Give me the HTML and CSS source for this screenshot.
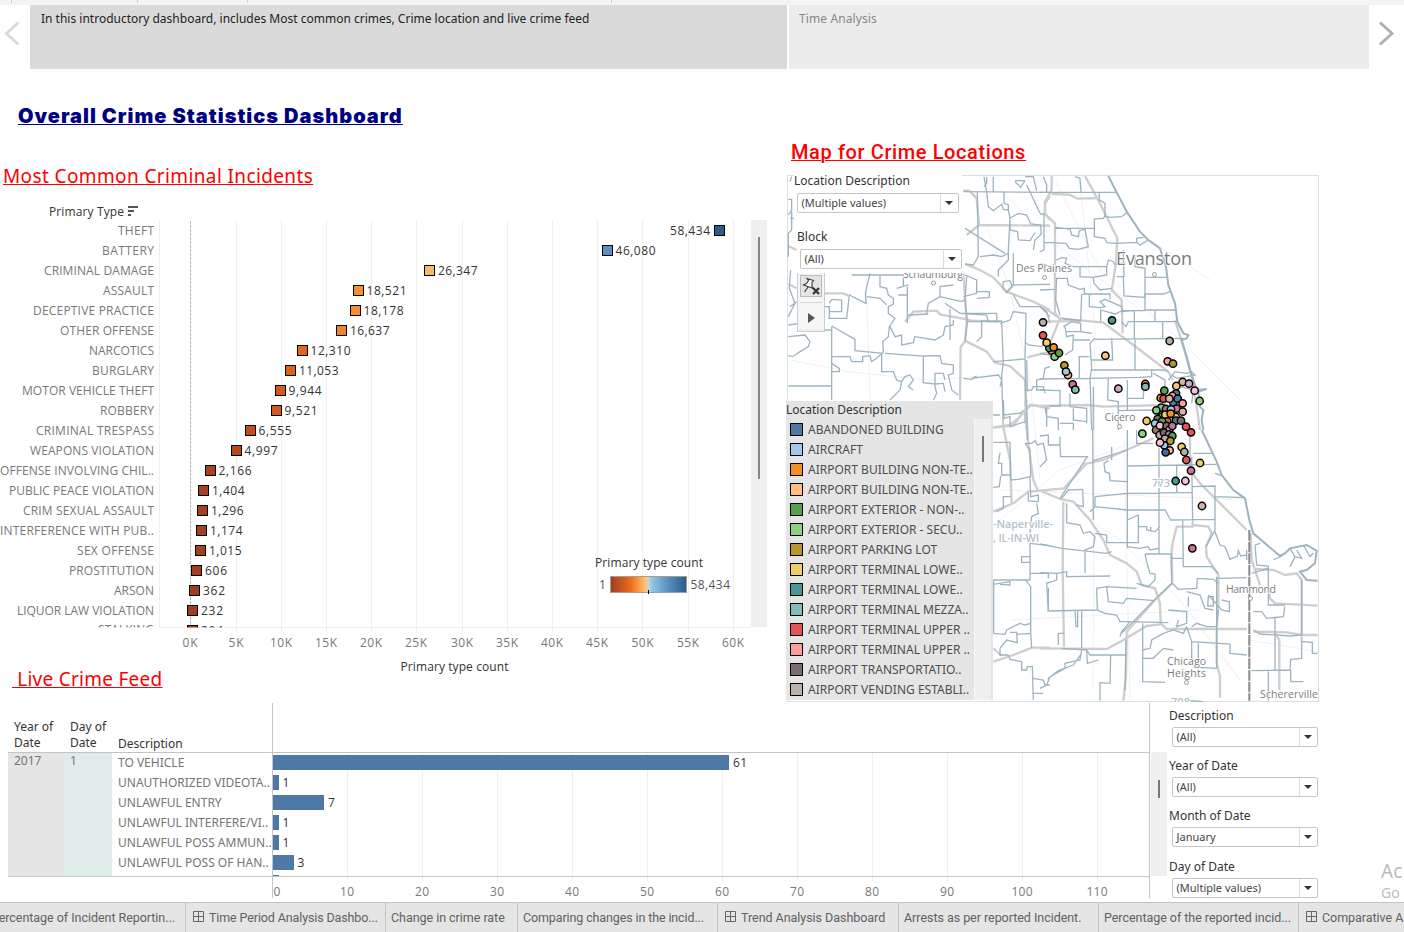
FILE: index.html
```html
<!DOCTYPE html>
<html lang="en">
<head>
<meta charset="utf-8">
<title>Overall Crime Statistics Dashboard</title>
<link rel="stylesheet" href="styles.css">
</head>
<body>
<div class="page">
<div class="strip"><i class="t1"></i><i class="t2"></i><i class="t3"></i><i class="t4"></i></div>
<nav class="story">
  <div class="arrow prev"><svg width="30" height="64" viewBox="0 0 30 64"><path d="M18.5 17.500 6.500 28.500 18.500 39.500" /></svg></div>
  <div class="point active"><span>In this introductory dashboard, includes Most common crimes, Crime location and live crime feed</span></div>
  <div class="point next-point"><span>Time Analysis</span></div>
  <div class="arrow next"><svg width="35" height="64" viewBox="0 0 35 64"><path d="M11 17.500 23 28.500 11 39.500" /></svg></div>
</nav>
<main class="upper">
  <section class="left">
    <h1>Overall Crime Statistics Dashboard</h1>
    <h2 class="incidents">Most Common Criminal Incidents</h2>
    <svg class="chart" width="767" height="466" viewBox="0 200 767 466">
      <defs>
        <clipPath id="rows"><rect x="0" y="220" width="751" height="407.500"/></clipPath>
        <linearGradient id="ramp"><stop offset="0" stop-color="#9e3d22"/><stop offset=".27" stop-color="#ec6d1d"/><stop offset=".45" stop-color="#ffbe69"/><stop offset=".5" stop-color="#d3d3cf"/><stop offset=".54" stop-color="#94c8e5"/><stop offset=".75" stop-color="#5a91c0"/><stop offset="1" stop-color="#2b5c8a"/></linearGradient>
      </defs>
      <text class="cap" x="49" y="216" textLength="75">Primary Type</text>
      <path d="M128 207h10M128 211h6M128 215h3" stroke="#555" stroke-width="2"/>
      <path class="grid" d="M159.500 220V627M236.500 220V632M281.500 220V632M326.500 220V632M371.500 220V632M416.500 220V632M462.500 220V632M507.500 220V632M552.500 220V632M597.500 220V632M642.500 220V632M688.500 220V632M733.500 220V632M190.500 627V632M159 627.500H751"/>
      <path d="M190.500 221V627" stroke="#b9b9b9" stroke-dasharray="3 1"/>
      <rect x="751" y="220" width="16" height="407" fill="#efefef"/><rect x="758" y="237" width="2" height="242" fill="#858585"/>
      <g clip-path="url(#rows)">
      <g class="lab">
        <text x="118" y="235" textLength="36">THEFT</text><text x="102" y="255" textLength="52">BATTERY</text><text x="44" y="275" textLength="110">CRIMINAL DAMAGE</text><text x="103" y="295" textLength="51">ASSAULT</text><text x="33" y="315" textLength="121">DECEPTIVE PRACTICE</text><text x="60" y="335" textLength="94">OTHER OFFENSE</text><text x="89" y="355" textLength="65">NARCOTICS</text><text x="92" y="375" textLength="62">BURGLARY</text><text x="22" y="395" textLength="132">MOTOR VEHICLE THEFT</text><text x="100" y="415" textLength="54">ROBBERY</text><text x="36" y="435" textLength="118">CRIMINAL TRESPASS</text><text x="30" y="455" textLength="124">WEAPONS VIOLATION</text><text x="0" y="475" textLength="154">OFFENSE INVOLVING CHIL..</text><text x="9" y="495" textLength="145">PUBLIC PEACE VIOLATION</text><text x="23" y="515" textLength="131">CRIM SEXUAL ASSAULT</text><text x="0" y="535" textLength="154">INTERFERENCE WITH PUB..</text><text x="77" y="555" textLength="77">SEX OFFENSE</text><text x="69" y="575" textLength="85">PROSTITUTION</text><text x="114" y="595" textLength="40">ARSON</text><text x="17" y="615" textLength="137">LIQUOR LAW VIOLATION</text><text x="98" y="634" textLength="56">STALKING</text>
      </g>
      <g class="mark">
        <rect x="714.500" y="225.500" width="10" height="10" fill="#2b5c8a"/><rect x="602.500" y="245.500" width="10" height="10" fill="#5a8fbf"/><rect x="424.500" y="265.500" width="10" height="10" fill="#fdb768"/><rect x="353.500" y="285.500" width="10" height="10" fill="#f98f35"/><rect x="350.500" y="305.500" width="10" height="10" fill="#f88d33"/><rect x="336.500" y="325.500" width="10" height="10" fill="#f3832c"/><rect x="297.500" y="345.500" width="10" height="10" fill="#e2651e"/><rect x="285.500" y="365.500" width="10" height="10" fill="#dc601e"/><rect x="275.500" y="385.500" width="10" height="10" fill="#d55a1f"/><rect x="271.500" y="405.500" width="10" height="10" fill="#d35920"/><rect x="245.500" y="425.500" width="10" height="10" fill="#c04e21"/><rect x="231.500" y="445.500" width="10" height="10" fill="#b84a22"/><rect x="205.500" y="465.500" width="10" height="10" fill="#aa4222"/><rect x="198.500" y="485.500" width="10" height="10" fill="#a53f22"/><rect x="197.500" y="505.500" width="10" height="10" fill="#a53f22"/><rect x="196.500" y="525.500" width="10" height="10" fill="#a43f22"/><rect x="195.500" y="545.500" width="10" height="10" fill="#a33f22"/><rect x="191.500" y="565.500" width="10" height="10" fill="#a03d22"/><rect x="189.500" y="585.500" width="10" height="10" fill="#9f3d22"/><rect x="187.500" y="605.500" width="10" height="10" fill="#9e3d22"/><rect x="187.500" y="625.500" width="10" height="10" fill="#9e3d22"/>
      </g>
      <g class="val">
        <text x="670" y="235" textLength="40">58,434</text><text x="615.500" y="255" textLength="40">46,080</text><text x="438" y="275" textLength="39.500">26,347</text><text x="366.500" y="295" textLength="40">18,521</text><text x="363.500" y="315" textLength="40">18,178</text><text x="350" y="335" textLength="39.500">16,637</text><text x="310.500" y="355" textLength="40">12,310</text><text x="299" y="375" textLength="39.500">11,053</text><text x="288.500" y="395" textLength="33">9,944</text><text x="284.500" y="415" textLength="33">9,521</text><text x="258.500" y="435" textLength="33">6,555</text><text x="244.500" y="455" textLength="33">4,997</text><text x="218.500" y="475" textLength="33">2,166</text><text x="212" y="495" textLength="32.500">1,404</text><text x="211" y="515" textLength="32.500">1,296</text><text x="210" y="535" textLength="32.500">1,174</text><text x="209" y="555" textLength="32.500">1,015</text><text x="205" y="575" textLength="22">606</text><text x="203" y="595" textLength="22">362</text><text x="201" y="615" textLength="22">232</text><text x="201" y="635" textLength="22">204</text>
      </g></g>
      <g class="lab mid"><text x="190" y="647" textLength="15">0K</text><text x="236" y="647" textLength="15">5K</text><text x="281" y="647" textLength="22">10K</text><text x="326" y="647" textLength="22">15K</text><text x="371" y="647" textLength="22">20K</text><text x="416" y="647" textLength="22">25K</text><text x="462" y="647" textLength="22">30K</text><text x="507" y="647" textLength="22">35K</text><text x="552" y="647" textLength="22">40K</text><text x="597" y="647" textLength="22">45K</text><text x="642.500" y="647" textLength="22">50K</text><text x="688" y="647" textLength="22">55K</text><text x="733" y="647" textLength="22">60K</text></g>
      <text class="cap" x="400.500" y="671" textLength="108">Primary type count</text>
      <text class="cap" x="595" y="567" textLength="108">Primary type count</text>
      <rect x="610.500" y="576.500" width="76" height="16" fill="url(#ramp)" stroke="#a49d94"/>
      <path d="M648.500 590V594" stroke="#000"/>
      <g class="val soft"><text x="599" y="589">1</text><text x="690.500" y="589" textLength="39.500">58,434</text></g>
    </svg>
    <h2 class="live">&nbsp;Live Crime Feed</h2>
  </section>
  <section class="right">
    <h2 class="maptitle">Map for Crime Locations</h2>
    <div class="map">
    <svg width="532" height="527" viewBox="787 175 532 527">
      <rect x="787.500" y="175.500" width="531" height="526" fill="#fff" stroke="#dcdfe0"/>
      <g class="faint">
        <path d="M988 230 1010 290 1030 380 1040 480M1055 180 1100 270 1180 340 1240 400M1000 520 1060 470 1140 440M790 360 850 372 930 380 1000 375M1000 190 1050 240 1140 310M1060 500 1120 540 1180 600 1240 680M1250 640 1318 652M866 275 870 400M1080 180 1095 330 1093 690M1000 490 1250 500M1010 620 1200 610M1124 440 1130 700M1210 280 1150 240"/>
      </g>
      <g class="third" transform="translate(780 160) scale(.33333)">
        <path class="road" d="M550 92H568L590 115 597 195 810 197M597 195 560 225M810 108 795 130V160L810 180M555 312 595 328 640 352 680 395 760 425 810 450M375 485 400 455 470 452 480 463 560 478 575 482 660 485M550 340 556 420 560 490 555 545 542 560 540 720M555 542 620 575 645 608 690 618 735 660 740 810M742 592 810 575M135 400H190L205 407M25 372 50 385M25 258 50 270M720 760 755 735 810 745M640 803 700 797 720 770"/>
        <path d="M612 50 620 95 625 140 640 152 665 133 670 148 685 150V135L672 130V97M550 95 810 97M620 50V70L612 80M705 62H735M705 65 722 82 735 62M740 75 780 160M735 50H760L770 92M685 150 690 175 715 160 740 165 752 192 782 195 784 222 765 240 760 270M690 175V210L713 215 715 240 750 242 765 218M690 175 685 270V300L655 330V350M555 205 675 280M592 97 595 290 580 315 555 312M600 290 640 285 665 290 685 280M700 280V375L680 395M700 375 810 373M670 365 690 362 697 380 680 398 668 385ZM550 410 590 400V360L555 345M590 415 628 412V395H590M480 410 545 425 555 418M25 495 60 490M25 530 75 525 90 545 85 560 60 575 38 590 25 587M60 510H155M145 475H200L208 405 258 430 256 400 270 340M148 475V440H135M148 430 155 418 185 420V455H150M155 498 225 538V572L310 580M155 500V590H210L215 605H248V590L270 587 275 605 295 590 310 575 308 545 325 530 328 500 345 475 325 460V440L340 432V415L325 405 320 385 300 380V345M260 410 300 415 320 435M25 678H155V590M155 678V720M155 610 178 625V635H155M305 580V635H340L350 660 365 665 360 690 330 720M365 665 375 650 390 645 400 660 385 680 400 690M315 580 430 588V668L465 672 490 670 495 695M460 720 470 700 465 680V640H490L495 660M430 588 480 587 485 610 520 615V640L505 645 515 690 535 705M330 500 345 530 365 525V555L400 548 405 530 465 540 490 525 495 500 520 495V480M385 465 445 462M382 380V490M355 405H382M510 447V540M495 430 540 460 620 465 625 485M540 460H650V485L605 483V530L590 545M560 485H605M625 485 665 483 670 610 665 645 670 810M560 350 555 420 562 485 555 545M640 605 735 597 738 460 700 455 690 480 660 490M550 655 575 658 590 648 575 655 655 645 665 660 660 680M735 597 740 810M738 548 745 555 785 560 800 540M740 600 742 692 755 690 760 680H790L795 700M790 690H770V660L790 655 795 625 810 620M670 765 735 758V790M700 405 720 440H780L810 470M215 345H370V380M350 385 385 375M30 65 35 50M25 118H35V150L25 165M35 155V210L25 220V290M30 175H45M32 330 28 385 45 430 25 470M50 425 30 440M440 462 445 430 480 410V380L520 375M790 50 800 75V97M640 97V50"/>
      </g>
      <g class="third" transform="translate(1040 160) scale(.33333)">
        <path class="road" d="M35 48V90L15 125V162L45 190V460L60 475 30 550M35 102 88 104 112 116 172 114M135 48 172 115 232 235 228 310 215 390 245 420 248 520M0 435 60 475 190 488 300 570 385 635 398 660M0 738 140 735 190 740 370 735M405 480 430 560 455 650 470 740 480 810M0 485 120 483"/>
        <path class="shore" d="M205 48 230 97 262 158 300 215 325 240 360 265 378 320 385 375 405 430 412 485 430 520 445 525 440 535 425 540 440 590 452 635 470 690 500 687 475 695 480 740 490 750 485 780 490 810"/>
        <path d="M0 97H230M105 50 120 55 123 95M178 97V120L195 130V168L190 175 163 177V230L195 235 200 248 230 250 290 247V235L310 232M195 168 208 172 245 170 260 158M290 247 300 255 325 240M45 202 90 207 95 225 115 230 118 212 135 208 145 260 115 268 88 265 78 250 12 247M45 205H163M12 190V270L0 275M0 162H12V190M48 300 65 293 80 295 75 310 100 320H200L205 300 220 305 225 315M120 320V350L160 352 162 370 180 390 215 385M48 355H82L85 375 120 388 133 385V402M200 320V345L160 352M133 402 125 405 122 482 65 475M133 402H148V440L180 443 195 440 180 425 195 418 245 440M148 402H210V418M50 355 47 420 60 465M230 350H250L252 408 312 412 315 402H370L390 395M250 270 252 350M285 290V320L315 325V450M315 352H380M315 402V450H405M245 440V452H315M182 485V450L225 462 240 455 283 452V485H265L258 500 245 485M283 452V535M345 452V485H412M283 485H345M368 485V535M165 538 430 535M165 535 150 550 155 625 150 655M152 630H370L385 635M215 535 218 600H155M285 535V630M0 657 150 655 155 810M205 655 203 720 235 725V810M150 655 300 652 335 650V630M262 660V715H310L312 665M70 500 95 485 122 490V515L155 520M75 500 80 530 100 525 98 570 75 585M80 515H122M100 540H150M115 590H148M118 592V655M0 690 60 692V738H20M90 700V740L140 745V790M235 752 340 750M160 680V810M0 580 30 585M0 440 20 455 30 490M385 660 405 635 440 640 455 635 465 645 440 650 410 655 395 645M0 310 30 320 45 340M0 390 45 388M20 740V800M60 790H100V810M340 640 375 660V735M420 680 460 690 455 730M15 740 20 770 55 775V810M100 745V780L140 785M262 715V750"/>
      </g>
      <g class="third" transform="translate(1040 430) scale(.33333)">
        <path class="road" d="M130 103 190 90 340 25M0 182 72 175 140 100M0 182 60 207 100 215 150 270 190 330 210 375 260 400 290 425 305 465 345 475 360 520 362 580 380 597H620M70 215 68 420 72 650M0 655 200 657 250 630 320 588 362 583M640 605 740 607 785 615H833M450 0V120L480 160 620 300M458 275V290H410L400 330 395 360 397 460 345 510 260 605 258 740 250 812M458 285 505 290 515 310 498 350 500 380 535 435V520L530 600V700L540 740V803M632 310 635 390 660 465M640 417 700 420 735 435 770 430 785 450V635M685 470 690 505 705 520 833 527M705 610 718 630V780"/>
        <path class="state" d="M628 300V812"/>
        <path class="shore" d="M485 0 530 95 545 135 580 180 615 205 628 270 640 310 720 378 735 370 750 355 800 345 830 362 825 400 800 420 780 425 800 450 833 452"/>
        <path d="M0 18 25 15V45H60V20M60 45 62 80H142L60 205M158 0 160 270M160 92 262 60M205 92 192 100 195 125 208 130 210 152 260 155M262 0V240M262 108 530 103M165 200 262 190 455 187M165 230 262 240H375L392 270 525 268M357 55V370M410 105V187M455 80 458 275M455 170 525 168V300L498 350M525 200 615 203M460 70H520M525 130 545 137M65 205 85 180 128 178 130 230 110 225M80 220V278L120 285 130 310 150 305 165 320 160 350 135 360V430M0 342 65 355 200 370 215 365M165 310 200 315V338H295V255L262 270M165 200V230L150 245M262 240V355M295 290H320V300L345 305 360 290M332 290V305M262 350 300 355 325 350 330 360 355 355M315 372H393L395 460M315 372 320 395 330 430 345 432V450L325 470 290 460M0 428 50 430 80 425V440L210 438M25 540 20 460 50 450V430M22 543 170 540M200 470 170 475 172 540 195 550 230 555 240 575H270M200 470 290 475M200 470 205 515 250 520 260 505 345 512M428 268 430 410H515L535 430M395 385H428M395 460 345 508 245 610M525 305 540 345 555 350 570 388 592 378 595 362 602 378 620 375M535 445 620 443M397 460 415 478 470 475 472 445 520 448 535 460M440 485 480 495 495 535 520 540M505 500H520V528H503ZM505 495 545 540 568 545V515L545 510M535 540 530 590H500L470 580 455 590M385 540 440 545V580L410 590 415 570M445 500V530M440 590 455 635 570 642V670L620 675M455 635V700L435 705M475 640V712L530 715M530 440V715M125 543V655M105 540 108 590H113V540M72 610H55V645M65 655 140 660 150 675H260M140 660 142 700 175 690M125 660 120 690 75 700V715L30 740 20 765 0 775M125 670 100 705 55 722 25 745V755M212 675 210 760 180 758V812M240 620 245 605 270 575 385 578M258 630 255 780M308 580V755L375 757M308 660 330 655 335 630 370 610 400 600 430 610 440 590M308 685H340L370 655 400 660M450 812 490 815M640 545H665L680 565 730 560 735 530M705 565V720M685 415V525H735M635 722 750 720 752 688 785 685V635L817 637V670H833M752 720V755H790M640 600 660 612 750 618 785 615V450M645 345 650 405 685 408V415L635 430M645 345 660 340M750 410 765 380 750 355M765 380 785 385 770 360M790 345 810 380 820 370M725 378 700 390M685 722V812M620 390V360M215 50V90M290 0V40H340"/>
      </g>
      <g class="third" transform="translate(780 400) scale(.33333)">
        <path class="road" d="M640 82 690 75 715 55 750 15 810 20M735 0 745 130 760 240 775 275M640 335 700 310 745 275 810 270M640 785 700 765 755 743H810M640 745 665 768M670 80 690 180 695 310"/>
        <path d="M640 45H660M670 0 672 55 690 50V80L735 65M640 127H690L692 240 715 238 750 230 752 290 775 285V305L745 303V278M735 130 755 130 765 122 772 135 790 130 800 180 780 200M735 130 750 150 752 230M660 158 655 190H665V225H692M640 262 658 260 662 228M692 290H670V325L650 335M770 310 775 340 755 350 750 400V540H640M750 430 810 437M748 470H725V487H748M640 553 690 545V555L660 553M735 538 752 560V700L755 745M752 520H805V535M805 563V630M640 700 675 703 680 690 720 670 735 675 752 670M690 697H710L712 728 680 720 660 745V765H685M710 703 752 700M685 765 690 778 725 785V810H740L742 800H757L760 900M760 835 790 840 795 855H810M757 880H790M641 540V700M740 0 742 120"/>
      </g>
      <g class="place">
        <text x="903" y="278" textLength="60">Schaumburg</text><circle cx="933.500" cy="283" r="2"/>
        <text x="1016" y="271.500" textLength="56">Des Plaines</text><circle cx="1044.500" cy="277.500" r="2"/>
        <text x="1116" y="265" textLength="76" font-size="18">Evanston</text><circle cx="1154.500" cy="274.500" r="2"/>
        <text x="1104.500" y="420.500" textLength="31">Cicero</text><circle cx="1119.500" cy="426.500" r="2"/>
        <text x="1226" y="593" textLength="50">Hammond</text><circle cx="1250.500" cy="598.500" r="2"/>
        <text x="1167" y="664.500" textLength="39">Chicago</text><text x="1167" y="677" textLength="39">Heights</text><circle cx="1186.500" cy="682.500" r="2"/>
        <text x="1260" y="698" textLength="58">Schererville</text>
      </g>
      <g class="area"><text x="1152" y="487" textLength="18">773</text><text x="1171" y="706" textLength="19">708</text><text x="993" y="528" textLength="60">-Naperville-</text><text x="993" y="541.500" textLength="46">, IL-IN-WI</text></g>
      <g class="dots" transform="translate(1040 160) scale(.33333)">
        <circle cx="9" cy="487" r="11" fill="#b8aea8"/><circle cx="216" cy="481" r="11" fill="#499894"/><circle cx="389" cy="543" r="11" fill="#b8aea8"/><circle cx="9" cy="526" r="11" fill="#e15759"/><circle cx="35" cy="572" r="11" fill="#ff9d9a"/><circle cx="28" cy="564" r="11" fill="#499894"/><circle cx="20" cy="548" r="11" fill="#f1ce63"/><circle cx="44" cy="590" r="11" fill="#8cd17d"/><circle cx="57" cy="579" r="11" fill="#59a14f"/><circle cx="41" cy="562" r="11" fill="#f28e2b"/><circle cx="196" cy="587" r="11" fill="#ffbe7d"/><circle cx="73" cy="616" r="11" fill="#b6992d"/><circle cx="84" cy="645" r="11" fill="#ffbe7d"/><circle cx="78" cy="635" r="11" fill="#a0cbe8"/><circle cx="98" cy="673" r="11" fill="#d37295"/><circle cx="106" cy="689" r="11" fill="#86bcb6"/><circle cx="235" cy="686" r="11" fill="#d4a6c8"/><circle cx="316" cy="672" r="11" fill="#f28e2b"/><circle cx="316" cy="680" r="11" fill="#86bcb6"/><circle cx="383" cy="604" r="11" fill="#ff9d9a"/><circle cx="399" cy="611" r="11" fill="#b6992d"/><circle cx="428" cy="666" r="11" fill="#d7b5a6"/><circle cx="447" cy="671" r="11" fill="#d4a6c8"/><circle cx="464" cy="692" r="11" fill="#fabfd2"/><circle cx="479" cy="723" r="11" fill="#8cd17d"/>
      </g>
      <g class="dots" transform="translate(1130 370) scale(.33333)">
        <circle cx="138" cy="70" r="11" fill="#4e79a7"/><circle cx="103" cy="62" r="11" fill="#59a14f"/><circle cx="139" cy="48" r="11" fill="#ffbe7d"/><circle cx="92" cy="84" r="11" fill="#f28e2b"/><circle cx="101" cy="86" r="11" fill="#e15759"/><circle cx="127" cy="78" r="11" fill="#ff9d9a"/><circle cx="130" cy="98" r="11" fill="#4e79a7"/><circle cx="118" cy="86" r="11" fill="#d7b5a6"/><circle cx="143" cy="86" r="11" fill="#4e79a7"/><circle cx="94" cy="113" r="11" fill="#86bcb6"/><circle cx="79" cy="121" r="11" fill="#8cd17d"/><circle cx="140" cy="116" r="11" fill="#d37295"/><circle cx="158" cy="100" r="11" fill="#ff9d9a"/><circle cx="158" cy="125" r="11" fill="#d7b5a6"/><circle cx="108" cy="117" r="11" fill="#9d7660"/><circle cx="123" cy="118" r="11" fill="#a0cbe8"/><circle cx="137" cy="141" r="11" fill="#f1ce63"/><circle cx="95" cy="140" r="11" fill="#b6992d"/><circle cx="106" cy="134" r="11" fill="#f1ce63"/><circle cx="122" cy="131" r="11" fill="#f28e2b"/><circle cx="138" cy="152" r="11" fill="#4e79a7"/><circle cx="112" cy="154" r="11" fill="#e15759"/><circle cx="83" cy="147" r="11" fill="#79706e"/><circle cx="96" cy="154" r="11" fill="#59a14f"/><circle cx="153" cy="152" r="11" fill="#79706e"/><circle cx="75" cy="160" r="11" fill="#a0cbe8"/><circle cx="78" cy="180" r="11" fill="#9d7660"/><circle cx="90" cy="167" r="11" fill="#fabfd2"/><circle cx="110" cy="168" r="11" fill="#79706e"/><circle cx="118" cy="180" r="11" fill="#d4a6c8"/><circle cx="127" cy="168" r="11" fill="#b07aa1"/><circle cx="89" cy="195" r="11" fill="#b8aea8"/><circle cx="102" cy="188" r="11" fill="#79706e"/><circle cx="117" cy="193" r="11" fill="#b07aa1"/><circle cx="127" cy="198" r="11" fill="#59a14f"/><circle cx="105" cy="206" r="11" fill="#b8aea8"/><circle cx="121" cy="213" r="11" fill="#b6992d"/><circle cx="103" cy="226" r="11" fill="#a0cbe8"/><circle cx="90" cy="218" r="11" fill="#fabfd2"/><circle cx="119" cy="241" r="11" fill="#ffbe7d"/><circle cx="107" cy="247" r="11" fill="#3f6ca3"/><circle cx="50" cy="153" r="11" fill="#f1ce63"/><circle cx="37" cy="191" r="11" fill="#8cd17d"/><circle cx="168" cy="170" r="11" fill="#e15759"/><circle cx="183" cy="187" r="11" fill="#e15759"/><circle cx="155" cy="231" r="11" fill="#f1ce63"/><circle cx="163" cy="246" r="11" fill="#b8aea8"/><circle cx="169" cy="270" r="11" fill="#e15759"/><circle cx="210" cy="279" r="11" fill="#f1ce63"/><circle cx="183" cy="302" r="11" fill="#d37295"/><circle cx="137" cy="333" r="11" fill="#499894"/><circle cx="166" cy="333" r="11" fill="#fabfd2"/><circle cx="216" cy="408" r="11" fill="#d7b5a6"/><circle cx="187" cy="535" r="11" fill="#d37295"/>
      </g>
    </svg>
    <div class="overlay f1"><label>Location Description</label><div class="select w161"><span>(Multiple values)</span><b></b></div></div>
    <div class="overlay f2"><label>Block</label><div class="select w161"><span>(All)</span><b></b></div></div>
    <div class="tools"><div class="pin"><svg width="20" height="20" viewBox="0 0 20 20"><path d="M6 2.500 12.500 4.500 11 6.500V10.500L12.500 12.500 2.500 9 5.500 7.500 7.500 4.500ZM7 11 3.500 16" fill="#fafafa" stroke="#444" stroke-width="1.200"/><path d="M12 12 18 18M18 12 12 18" stroke="#333" stroke-width="2.200"/></svg></div><hr><div class="play"></div></div>
    <aside class="legend">
      <label>Location Description</label>
      <div class="lbody"><ul>
        <li><i style="background:#4e79a7"></i><span>ABANDONED BUILDING</span></li>
        <li><i style="background:#a0cbe8"></i><span>AIRCRAFT</span></li>
        <li><i style="background:#f28e2b"></i><span>AIRPORT BUILDING NON-TE..</span></li>
        <li><i style="background:#ffbe7d"></i><span>AIRPORT BUILDING NON-TE..</span></li>
        <li><i style="background:#59a14f"></i><span>AIRPORT EXTERIOR - NON-..</span></li>
        <li><i style="background:#8cd17d"></i><span>AIRPORT EXTERIOR - SECU..</span></li>
        <li><i style="background:#b6992d"></i><span>AIRPORT PARKING LOT</span></li>
        <li><i style="background:#f1ce63"></i><span>AIRPORT TERMINAL LOWE..</span></li>
        <li><i style="background:#499894"></i><span>AIRPORT TERMINAL LOWE..</span></li>
        <li><i style="background:#86bcb6"></i><span>AIRPORT TERMINAL MEZZA..</span></li>
        <li><i style="background:#e15759"></i><span>AIRPORT TERMINAL UPPER ..</span></li>
        <li><i style="background:#ff9d9a"></i><span>AIRPORT TERMINAL UPPER ..</span></li>
        <li><i style="background:#79706e"></i><span>AIRPORT TRANSPORTATIO..</span></li>
        <li><i style="background:#bab0ac"></i><span>AIRPORT VENDING ESTABLI..</span></li>
      </ul><div class="track"><i></i></div></div>
    </aside>
    </div>
  </section>
</main>
<section class="lower">
  <div class="table">
    <div class="thead"><span>Year of<br>Date</span><span>Day of<br>Date</span><span>Description</span></div>
    <div class="tbody"><div class="year">2017</div><div class="day">1</div><ul><li>TO VEHICLE</li><li>UNAUTHORIZED VIDEOTA..</li><li>UNLAWFUL ENTRY</li><li>UNLAWFUL INTERFERE/VI..</li><li>UNLAWFUL POSS AMMUN..</li><li>UNLAWFUL POSS OF HAN..</li></ul></div>
  </div>
  <svg class="bars" width="878" height="199" viewBox="272 703 878 199">
    <path class="grid" d="M347.500 753V881M422.500 753V881M497.500 753V881M572.500 753V881M647.500 753V881M722.500 753V881M797.500 753V881M872.500 753V881M947.500 753V881M1022.500 753V881M1097.500 753V881"/>
    <path d="M272.500 703V898M1149.500 703V898M272 752.500H1150M272 876.500H1150" stroke="#c4c4c4"/>
    <path d="M273 755H729V770H273ZM273 775H279V790H273ZM273 795H324V810H273ZM273 815H279V830H273ZM273 835H279V850H273ZM273 855H294V870H273ZM273 875H279V876H273Z" fill="#4e79a7"/>
    <g class="val"><text x="733" y="767" textLength="14">61</text><text x="282.500" y="787">1</text><text x="328" y="807">7</text><text x="282.500" y="827">1</text><text x="282.500" y="847">1</text><text x="297.500" y="867">3</text></g>
    <g class="lab mid"><text x="277" y="896">0</text><text x="347" y="896" textLength="14">10</text><text x="422" y="896" textLength="14">20</text><text x="497" y="896" textLength="14">30</text><text x="572" y="896" textLength="14">40</text><text x="647" y="896" textLength="14">50</text><text x="722" y="896" textLength="14">60</text><text x="797" y="896" textLength="14">70</text><text x="872" y="896" textLength="14">80</text><text x="947" y="896" textLength="14">90</text><text x="1022" y="896" textLength="21">100</text><text x="1097" y="896" textLength="21">110</text></g>
  </svg>
  <div class="track2"><i></i></div>
  <div class="filters">
    <div><label>Description</label><div class="select w145"><span>(All)</span><b></b></div></div>
    <div><label>Year of Date</label><div class="select w145"><span>(All)</span><b></b></div></div>
    <div><label>Month of Date</label><div class="select w145"><span>January</span><b></b></div></div>
    <div class="last"><label>Day of Date</label><div class="select w145"><span>(Multiple values)</span><b></b></div></div>
  </div>
  <div class="mark-note"><p>Ac</p><p class="go">Go</p></div>
</section>
<footer class="tabs">
  <div class="tab a"><span>Percentage of Incident Reportin...</span></div>
  <div class="tab b"><svg width="11" height="11"><path d="M.5.5h10v10H.5zM5.500 0v11M0 5.500h11"/></svg><span>Time Period Analysis Dashbo...</span></div>
  <div class="tab c"><span>Change in crime rate</span></div>
  <div class="tab d"><span>Comparing changes in the incid...</span></div>
  <div class="tab e"><svg width="11" height="11"><path d="M.5.5h10v10H.5zM5.500 0v11M0 5.500h11"/></svg><span>Trend Analysis Dashboard</span></div>
  <div class="tab f"><span>Arrests as per reported Incident.</span></div>
  <div class="tab g"><span>Percentage of the reported incid...</span></div>
  <div class="tab h"><svg width="11" height="11"><path d="M.5.5h10v10H.5zM5.500 0v11M0 5.500h11"/></svg><span>Comparative A</span></div>
</footer>
</div>
</body>
</html>
```
FILE: styles.css
```css
* { box-sizing: border-box; }
body { margin: 0; background: #fff; font-family: "Noto Sans", "Open Sans", sans-serif; font-size: 12px; color: #333; }
h1, h2, p, ul { margin: 0; padding: 0; }
ul { list-style: none; }
svg { display: block; fill: none; flex: none; }
.page { width: 1404px; height: 932px; overflow: hidden; display: flex; flex-direction: column; }

.strip { height: 5px; background: #f4f4f4; display: flex; }
.strip i { width: 1px; height: 3px; background: #ccc; }
.t1 { margin-left: 11px; }
.t2 { margin-left: 125px; }
.t3 { margin-left: 109px; }
.t4 { margin-left: 363px; }

.story { height: 64px; display: flex; }
.arrow { width: 30px; }
.arrow.next { width: 35px; }
.arrow path { stroke: #dadada; stroke-width: 3; }
.arrow.next path { stroke: #b0b0b0; }
.point { width: 580px; padding: 5px 10px; background: #ececec; color: #888; line-height: 18px; white-space: nowrap; }
.point.active { width: 757px; margin-right: 2px; padding-left: 11px; background: #dadada; color: #222; }
.next-point { letter-spacing: .1px; }

.upper { height: 634px; display: grid; grid-template-columns: 787px 1fr; }
h1 { margin: 34px 0 0 18px; font: 900 20px/26px Inter, "Liberation Sans", sans-serif; letter-spacing: 1px; color: #000080; text-decoration: underline; text-decoration-thickness: 1px; white-space: nowrap; }
h2 { font-weight: 400; font-size: 19px; line-height: 26px; color: #f00; text-decoration: underline; text-decoration-thickness: 1px; white-space: nowrap; }
.incidents { margin: 34px 0 11px 3px; letter-spacing: .38px; }
.live { margin-left: 12px; letter-spacing: .26px; }
.maptitle { margin: 70px 0 10px 4px; font-family: Roboto, sans-serif; font-weight: 500; font-size: 20px; letter-spacing: .6px; }

.chart { overflow: visible; }
text { font-family: "Open Sans", "Noto Sans", sans-serif; font-size: 12px; }
.cap { fill: #333; }
.lab text { fill: #787878; }
.mid text { text-anchor: middle; }
.val text { fill: #333; }
.soft text { fill: #555; }
.grid { stroke: #efefef; }
.mark rect { stroke: #000; }

.map { position: relative; width: 532px; height: 527px; }
.third path { stroke: #9db4c0; stroke-width: 3.9; }
.third .road { stroke: #cecece; stroke-width: 7; }
.third .shore { stroke-width: 6; }
.third .state { stroke: #888; stroke-width: 6; stroke-dasharray: 32 3; }
.faint path { stroke: #f1f1f1; }
.place text { fill: #7c7c7c; font-size: 10.5px; stroke: #fff; stroke-width: 1.5px; paint-order: stroke; }
.place text[font-size] { font-size: 18px; }
.place circle { stroke: #999; fill: #fff; }
.area text { fill: #b3c1ca; font-size: 11px; font-weight: 600; stroke: #fff; stroke-width: 2px; paint-order: stroke; }
.dots circle { stroke: #000; stroke-width: 4.4; }

.overlay { position: absolute; background: #fff; }
.f1 { left: 7px; top: -3px; width: 168px; height: 55px; }
.f2 { left: 10px; top: 52px; width: 168px; height: 46px; }
label { display: block; line-height: 18px; white-space: nowrap; color: #333; }
.select { height: 20px; display: flex; border: 1px solid #c6c6c6; border-radius: 2px; background: #fff; color: #444; font-size: 11px; line-height: 18px; }
.select span { flex: 1; padding-left: 3.5px; white-space: nowrap; }
.select b { width: 18px; border-left: 1px solid #dcdcdc; display: grid; place-items: center; padding-right: 1px; }
.select b::after { content: ""; border: solid transparent; border-width: 4px 4px 0; border-top-color: #333; }
.w161 { width: 162px; margin-left: 3px; }
.w145 { width: 146px; margin-left: 3px; }
.f1 .select { margin-top: 3px; }
.f2 label { padding-top: 1px; }
.f2 .select { margin-top: 3px; }
.tools { position: absolute; left: 10px; top: 98px; width: 28px; height: 59px; padding: 2px; background: rgba(245,245,245,.92); border: solid #ccc; border-width: 0 1px 1px; }
.pin { width: 22px; height: 22px; border: 1px solid #bbb; background: #e4e4e4; }
.tools hr { margin: 5px 0 0; border: 0; border-top: 1px solid #d8d8d8; }
.play { margin: 10px 0 0 8px; width: 0; border: solid transparent; border-width: 5px 0 5px 7px; border-left-color: #555; }

.legend { position: absolute; left: -1px; top: 226px; width: 207px; height: 299px; background: #e5e5e5; overflow: hidden; }
.lbody { display: flex; justify-content: space-between; padding-right: 2px; }
.legend ul { padding: 1px 0 0 4px; }
.legend li { height: 20px; display: flex; align-items: flex-start; gap: 5px; white-space: nowrap; color: #4d4d4d; line-height: 20px; }
.legend li i { width: 13px; height: 13px; margin-top: 3px; border: 1px solid #000; }
.track { width: 17px; height: 281px; background: #efefef; border-left: 1px solid #f8f8f8; padding: 17px 0 0 7px; }
.track i { display: block; width: 2px; height: 26px; background: #777; }

.lower { height: 199px; display: flex; }
.table { width: 272px; padding-left: 8px; }
.thead { height: 50px; display: grid; grid-template-columns: 56px 48px 1fr; align-items: end; border-bottom: 1px solid #c4c4c4; color: #333; line-height: 16px; }
.thead span { padding: 0 0 1px 6px; white-space: nowrap; }
.thead span:last-child { padding-bottom: 0; }
.tbody { height: 124px; display: grid; grid-template-columns: 56px 48px 1fr; border-bottom: 1px solid #c4c4c4; color: #757575; line-height: 16px; }
.year { background: #e5e5e5; padding-left: 6px; }
.day { background: #dfecea; padding-left: 6px; }
.tbody li { height: 20px; padding-left: 6px; line-height: 20px; white-space: nowrap; }
.track2 { width: 17px; height: 124px; margin-top: 49px; padding: 28px 0 0 7px; background: #efefef; border-left: 1px solid #fff; }
.track2 i { display: block; width: 2px; height: 18px; background: #777; }
.filters { width: 152px; padding: 4px 0 0 2px; }
.filters > div { height: 50px; }
.filters .last { padding-top: 1px; }
.filters .select { margin-top: 2px; }
.mark-note { padding: 153px 0 0 62px; color: #bcbcbc; font-size: 19px; line-height: 30px; width: 85px; overflow: hidden; }
.mark-note .go { font-size: 14px; line-height: 14px; }

.tabs { height: 30px; display: flex; border-top: 1px solid #c4c4c4; background: #e5e5e5; color: #616161; font: 12.5px/29px Roboto, sans-serif; }
.tab { border-right: 1px solid #c4c4c4; display: flex; padding-left: 5px; gap: 5px; white-space: nowrap; overflow: hidden; flex: none; letter-spacing: -.04px; }
.tab svg { margin: 8px 0 0 2px; stroke: #666; }
.a { width: 186px; padding: 0 10px 0 0; justify-content: flex-end; }
.b { width: 200px; letter-spacing: -.12px; }
.c { width: 132px; }
.d { width: 200px; letter-spacing: -.12px; }
.e { width: 181px; }
.f { width: 200px; }
.g { width: 200px; }
.h { width: 105px; border: 0; }
```
